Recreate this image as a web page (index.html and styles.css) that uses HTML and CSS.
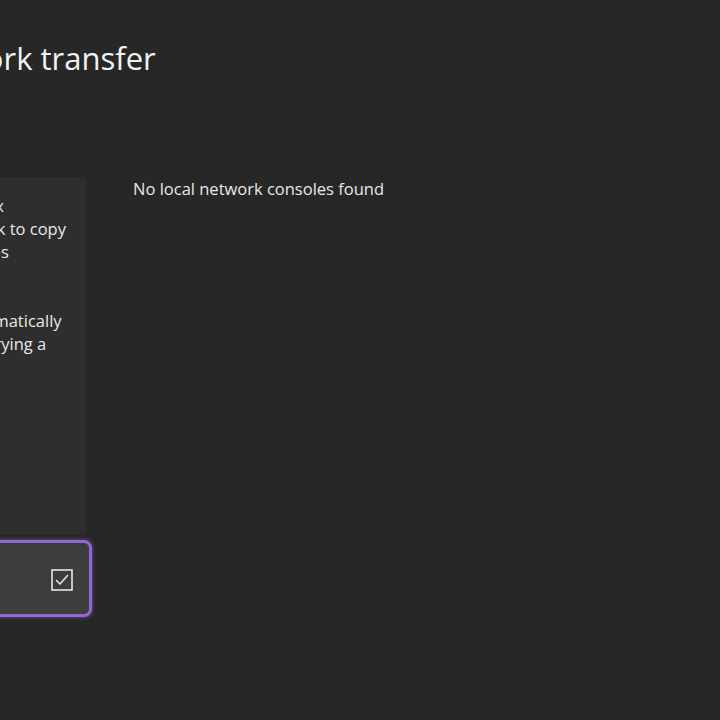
FILE: index.html
```html
<!DOCTYPE html>
<html lang="en">
<head>
<meta charset="utf-8">
<title>Network transfer</title>
<link rel="stylesheet" href="styles.css">
</head>
<body>
<div class="page">
  <h1 class="title">Network transfer</h1>
  <div class="main">
    <div class="side">
      <div class="panel">
        <p>an Xbox<br>network to copy<br>the apps</p>
        <p>is automatically<br>when trying a</p>
      </div>
      <div class="btn">
        <svg class="check" width="22" height="22" viewBox="0 0 22 22" aria-hidden="true">
          <rect x="1" y="1" width="20" height="20" fill="none" stroke="#e6e6e6" stroke-width="1.6"/>
          <path d="M5.5 11.5 L9 15 L16.5 6.5" fill="none" stroke="#e6e6e6" stroke-width="1.6" stroke-linecap="round" stroke-linejoin="round"/>
        </svg>
      </div>
    </div>
    <div class="content">
      <p class="empty">No local network consoles found</p>
    </div>
  </div>
</div>
</body>
</html>
```

FILE: styles.css
```css
html, body {
  margin: 0;
  padding: 0;
}
body {
  width: 720px;
  height: 720px;
  overflow: hidden;
  background: #272727;
  color: #e8e8e8;
  font-family: "Open Sans", "Noto Sans", "Liberation Sans", sans-serif;
}
.page {
  margin-left: -74px;
  padding-top: 38px;
}
.title {
  margin: 0 0 0 -17px;
  font-size: 31px;
  font-weight: 400;
  line-height: 40px;
  color: #f2f2f2;
  white-space: nowrap;
}
.main {
  display: flex;
  gap: 47px;
  margin-top: 99px;
}
.side {
  width: 160px;
  flex: none;
  display: flex;
  flex-direction: column;
  gap: 5px;
}
.panel {
  background: #2e2e2e;
  height: 358px;
  box-sizing: border-box;
  padding: 17px 16px;
  font-size: 16.5px;
  line-height: 23px;
  overflow: hidden;
}
.panel p {
  margin: 0;
  white-space: nowrap;
}
.panel p + p {
  margin-top: 46px;
}
.btn {
  height: 77px;
  box-sizing: border-box;
  margin-right: -6px;
  border: 3px solid #9466d1;
  border-radius: 8px;
  background: #3d3d3d;
  box-shadow: 0 0 4px rgba(150, 100, 220, 0.7);
  display: flex;
  align-items: center;
  justify-content: flex-end;
  padding: 3px 16px 0 0;
}
.check {
  display: block;
}
.content {
  flex: 1;
}
.empty {
  margin: 0;
  font-size: 16.5px;
  line-height: 23px;
  color: #e8e8e8;
}
```
